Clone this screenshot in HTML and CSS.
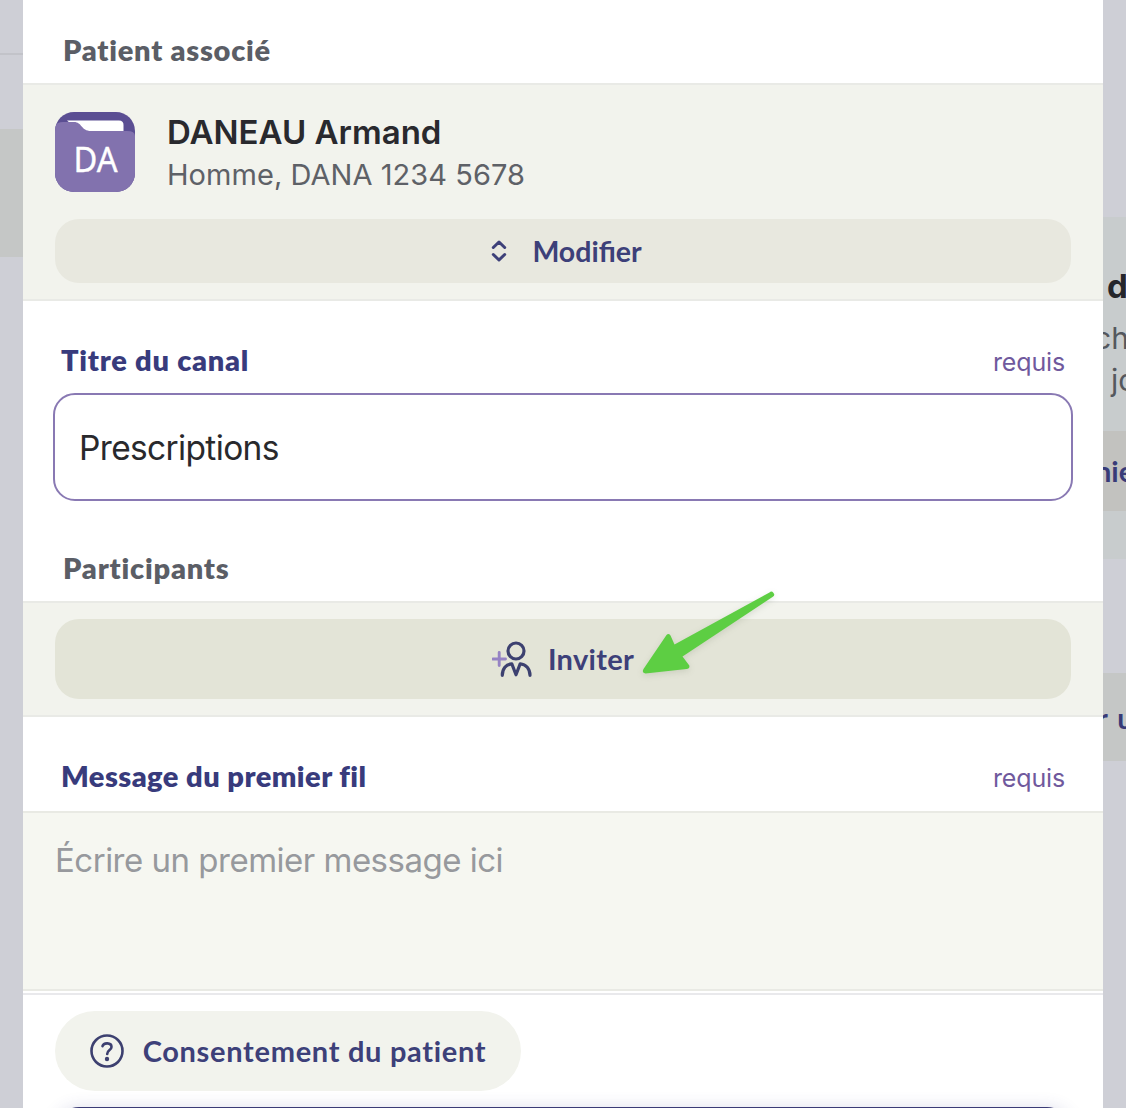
FILE: index.html
```html
<!DOCTYPE html>
<html lang="fr">
<head>
<meta charset="utf-8">
<title>Nouveau canal</title>
<link rel="stylesheet" href="styles.css">
</head>
<body>
<div class="screen">
  <aside class="backdrop backdrop-left">
    <div class="left-header"></div>
    <div class="left-gap"></div>
    <div class="left-selected"></div>
  </aside>

  <main class="modal">
    <header class="section-head head-patient"><h2 class="section-title"><span class="t-patient">Patient associé</span></h2></header>
    <section class="band band-patient">
      <div class="patient">
        <svg class="avatar" viewBox="0 0 80 80">
          <defs><clipPath id="tile"><rect width="80" height="80" rx="19"/></clipPath></defs>
          <g clip-path="url(#tile)">
            <rect width="80" height="80" fill="#5b4e93"/>
            <path d="M12 8.500H64Q68.500 8.500 68.500 13V24H30Z" fill="#fff"/>
            <path d="M0 14Q2 10 8 10H19C27 10 26 19 36 19H72Q80 19 80 24V80H0Z" fill="#8272ae"/>
          </g>
          <text class="initials" x="40.500" y="60" text-anchor="middle" textLength="44" lengthAdjust="spacingAndGlyphs">DA</text>
        </svg>
        <div class="patient-text">
          <div class="patient-name"><span class="t-name">DANEAU Armand</span></div>
          <div class="patient-meta"><span class="t-meta">Homme, DANA 1234 5678</span></div>
        </div>
      </div>
      <button class="btn btn-edit">
        <svg class="icon-sort" viewBox="0 0 16 22"><path d="M2.300 7.500L8 2L13.700 7.500M2.300 14.500L8 20L13.700 14.500"/></svg>
        <span class="t-edit">Modifier</span>
      </button>
    </section>

    <div class="field-head head-title"><label class="field-label"><span class="t-canal">Titre du canal</span></label><span class="required">requis</span></div>
    <div class="field"><span class="t-presc">Prescriptions</span></div>

    <header class="section-head head-people"><h2 class="section-title"><span class="t-people">Participants</span></h2></header>
    <section class="band band-people">
      <button class="btn btn-invite">
        <svg class="icon-invite" viewBox="0 0 40 36">
          <path class="plus" d="M1 18H13.500M7.200 11.500V24.500"/>
          <circle cx="24" cy="10" r="8"/>
          <path d="M10.300 34.300C10.300 28 14 23.200 19.800 22.800L24 33.800L28.200 22.800C34 23.200 38 28 38 34.300"/>
        </svg>
        <span class="t-invite">Inviter</span>
      </button>
      <svg class="arrow" viewBox="0 0 150 100">
        <path d="M149.500 -.5Q151.500 -2.500 153.500 0T152.500 4L62.500 63.500L69.300 72.500Q70 76 66.500 76L25.500 80.500Q21.500 80 23.500 76L46.500 42Q48.500 40 50.500 42.500L54.500 51.500Z"/>
      </svg>
    </section>

    <div class="field-head head-message"><label class="field-label"><span class="t-message">Message du premier fil</span></label><span class="required">requis</span></div>
    <div class="message"><span class="t-write">Écrire un premier message ici</span></div>

    <footer class="footer">
      <button class="btn btn-consent">
        <svg class="icon-help" viewBox="0 0 34 34"><circle cx="17" cy="17" r="15.500"/><path d="M12.500 12.200C13.500 8.400 21.500 8.200 21.500 13C21.500 16.200 17.200 16 17.200 20"/><circle class="dot" cx="17" cy="25" r="2.200"/></svg>
        <span class="t-consent">Consentement du patient</span>
      </button>
      <button class="btn-submit" aria-label="Créer"></button>
    </footer>
  </main>

  <aside class="backdrop backdrop-right">
    <div class="promo">
      <div class="promo-title">d</div>
      <div class="promo-text"><span class="cut-c">ch</span></div>
      <div class="promo-text promo-text-2">jo</div>
      <div class="promo-action"><span class="cut-n">nie</span></div>
    </div>
    <div class="side-action"><span class="cut-r">r u</span></div>
  </aside>
</div>
</body>
</html>
```

FILE: styles.css
```css
* { box-sizing: border-box; }
body { margin: 0; overflow: hidden; font-family: Inter, "Liberation Sans", sans-serif; }
h2 { margin: 0; }
button { border: 0; padding: 0; margin: 0; }
span { white-space: nowrap; }

.screen { display: grid; grid-template-columns: 23px 1080px 23px; height: 1108px; overflow: hidden; }

.backdrop { background: #cecfd6; overflow: hidden; min-width: 0; }
.left-header { height: 55px; border-bottom: 2px solid #c2c3c9; }
.left-gap { height: 74px; }
.left-selected { height: 128px; background: #c5c7c6; }

.modal { display: flex; flex-direction: column; background: #fff; height: 1108px; overflow: hidden; }
.modal > * { flex-shrink: 0; }

.section-head { display: flex; align-items: flex-end; padding: 0 40px 14px; }
.section-title, .field-label { font: 800 29px/38px Lato, sans-serif; color: #5b5e66; }
.head-patient { height: 83px; }
.head-people { height: 100px; }

.band { background: #f2f3ed; border: solid #e9eae6; border-width: 2px 0; padding: 0 32px; }
.band-patient { height: 218px; padding-top: 27px; }
.patient { display: flex; gap: 32px; height: 107px; }
.avatar { width: 80px; height: 80px; }
.initials { font: 400 35px "Noto Sans", sans-serif; fill: #fff; stroke: #fff; stroke-width: .4; }
.patient-text { margin-top: -1px; }
.patient-name { font-size: 33px; line-height: 42px; font-weight: 570; color: #29292e; }
.patient-meta { font-size: 29px; line-height: 44px; color: #5e6167; letter-spacing: .05px; }

.btn { display: flex; align-items: center; justify-content: center; font: 700 29px/38px Lato, sans-serif; color: #3d4079; }
.btn-edit { width: 100%; height: 64px; border-radius: 24px; background: #e8e8df; gap: 25px; padding-left: 7px; }
.t-edit { font-size: 28.500px; }
.icon-sort { width: 16px; height: 22px; fill: none; stroke: #3d4079; stroke-width: 3; stroke-linecap: round; stroke-linejoin: round; }

.t-patient { letter-spacing: .75px; }
.t-canal { letter-spacing: .75px; }
.t-people { letter-spacing: .8px; }
.t-message { letter-spacing: .45px; }
.t-invite { letter-spacing: .3px; }
.t-consent { letter-spacing: .7px; }
.t-presc { letter-spacing: -.65px; }
.t-write { letter-spacing: -.5px; }

.field-head { display: flex; justify-content: space-between; align-items: flex-end; padding: 0 38px 14px; }
.field-label { color: #383b7c; }
.required { font-size: 25px; line-height: 34px; color: #70599d; letter-spacing: -.15px; }
.head-title { height: 92px; }
.field { height: 108px; margin: 0 30px; padding: 2px 24px 0; border: 2px solid #8979b3; border-radius: 22px; display: flex; align-items: center; font-size: 33.5px; color: #29292c; }

.band-people { height: 116px; padding-top: 16px; position: relative; }
.btn-invite { width: 100%; height: 80px; border-radius: 24px; background: #e3e4d7; gap: 16px; }
.icon-invite { width: 40px; height: 36px; fill: none; stroke: #3d4170; stroke-width: 3.2; stroke-linecap: round; stroke-linejoin: round; }
.icon-invite .plus { stroke: #9683c4; stroke-width: 2.9; }
.arrow { position: absolute; left: 597px; top: -10px; width: 150px; height: 100px; overflow: visible; fill: #5dce43; filter: drop-shadow(0 2px 3px rgba(60, 80, 40, .14)); }

.head-message { height: 94px; padding-bottom: 16px; }
.message { height: 180px; background: #f6f7f1; border: solid #e9eae4; border-width: 2px 0; padding: 25px 32px; font-size: 33px; line-height: 44px; color: #97999d; }

.footer { height: 115px; margin-top: 2px; border-top: 2px solid #e9e9ec; padding: 16px 32px 0; overflow: hidden; }
.btn-consent { width: 466px; height: 80px; border-radius: 40px; background: #f2f3ed; gap: 19px; }
.icon-help { width: 34px; height: 34px; fill: none; stroke: #3d4070; stroke-width: 2.600; stroke-linecap: round; }
.icon-help .dot { fill: #3d4070; stroke: none; }
.btn-submit { display: block; width: 100%; height: 80px; margin-top: 16px; border-radius: 24px; background: #3b3c76; box-shadow: 0 2px 18px rgba(60, 60, 140, .2); }

.backdrop-right { padding-top: 217px; }
.promo { height: 342px; background: #c8cccd; padding-top: 48px; }
.promo-title { padding-left: 4px; font-size: 33px; font-weight: 700; line-height: 42px; color: #25262b; }
.promo-text { font-size: 30px; line-height: 42px; padding-top: 10px; height: 52px; color: #55585e; }
.promo-text-2 { padding: 0 0 0 8px; height: 42px; }
.promo-action { margin-top: 30px; height: 80px; background: #c2c2bf; font: 700 29px/80px Lato, sans-serif; color: #383b78; }
.cut-c { margin-left: -9px; }
.cut-n { margin-left: -8px; }
.cut-r { margin-left: -6px; word-spacing: 3px; }
.side-action { margin-top: 114px; height: 88px; background: #c5c7c6; font: 700 29px/90px Lato, sans-serif; color: #383b78; }
```
